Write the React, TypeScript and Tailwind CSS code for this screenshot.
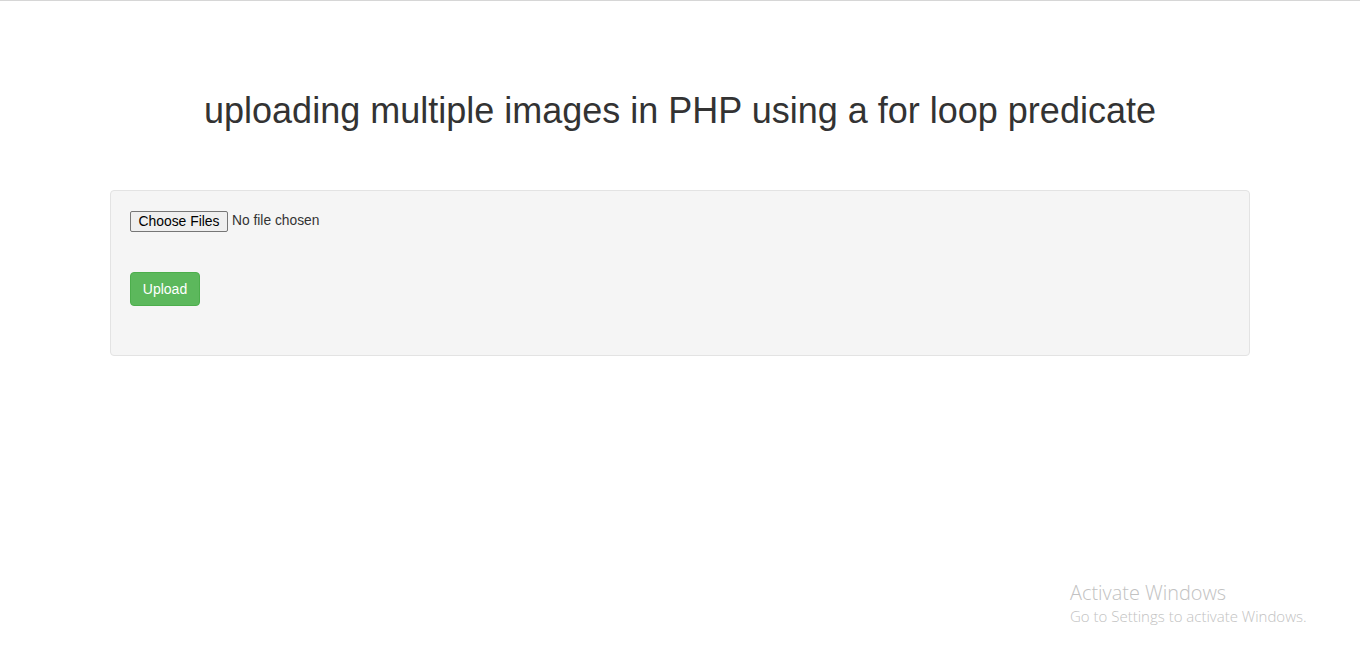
export default function App() {
  return (
    <div className="relative min-h-[656px] bg-white border-t border-[#d6d6d6] font-['Liberation_Sans',Arial,sans-serif] text-[#333]">
      <div className="mx-auto w-[1170px] px-[15px]">
        <h1 className="mt-[90px] text-center text-[36px] leading-[40px] font-normal text-[#333]">
          uploading multiple images in PHP using a for loop predicate
        </h1>

        {/* Well */}
        <form className="mt-[59px] h-[166px] rounded-[4px] border border-[#e3e3e3] bg-[#f5f5f5] px-[19px] pt-[20px]">
          <div className="flex h-[21px] items-center text-[#333]">
            <span className="flex h-[21px] w-[98px] items-center justify-center rounded-[2px] border border-[#767676] bg-[#efefef] text-[13.9px] text-black">
              Choose Files
            </span>
            <span className="ml-[4px] text-[13.8px]">No file chosen</span>
          </div>

          <button
            type="button"
            className="mt-[40px] h-[34px] w-[70px] rounded-[4px] border border-[#4cae4c] bg-[#5cb85c] text-[14px] text-white"
          >
            Upload
          </button>
        </form>
      </div>

      {/* Windows activation watermark */}
      <div className="absolute left-[1070px] top-[579px] font-['Open_Sans','Noto_Sans',sans-serif] text-[#c2c2c2]">
        <div className="text-[19.9px] leading-[26px] font-light">Activate Windows</div>
        <div className="text-[15px] leading-[20px] font-light">Go to Settings to activate Windows.</div>
      </div>
    </div>
  );
}
